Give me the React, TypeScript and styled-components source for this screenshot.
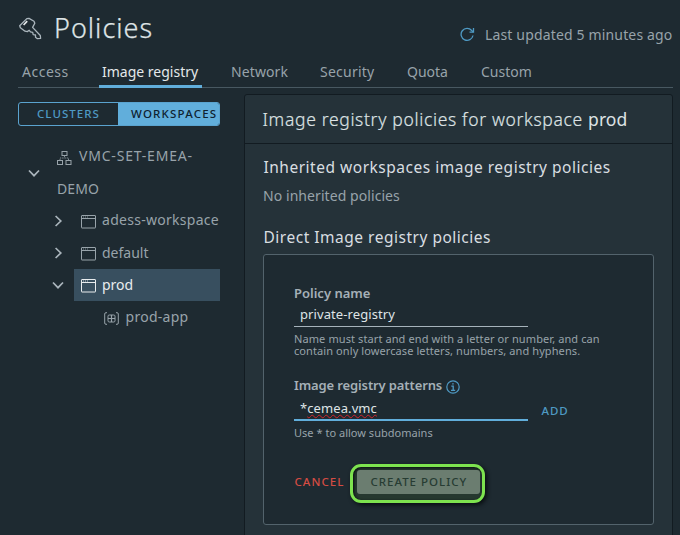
import React from "react";
import styled, { createGlobalStyle } from "styled-components";

const GlobalStyle = createGlobalStyle`
  * { box-sizing: border-box; }
  body {
    margin: 0;
    background: #1e2a31;
    color: #98a3aa;
    font-family: "Noto Sans", sans-serif;
    font-size: 14px;
    overflow: hidden;
  }
`;

const Page = styled.div`
  width: 680px;
  height: 535px;
  overflow: hidden;
  padding: 0 7.5px 0 18px;
  white-space: nowrap;
`;

const Header = styled.header`
  display: flex;
  align-items: center;
  height: 57px;
`;

const KeyIcon = styled.svg`
  width: 24px;
  height: 24px;
  margin: 1px 12px 0 0;
`;

const Title = styled.h1`
  margin: 0;
  height: 57px;
  line-height: 55px;
  font-size: 27px;
  font-weight: 300;
  letter-spacing: 1px;
  color: #dfe4e6;
  -webkit-text-stroke: 0.25px #dfe4e6;
`;

const Updated = styled.div`
  display: flex;
  align-items: center;
  gap: 10px;
  height: 20px;
  margin: 11px 0 0 auto;
  letter-spacing: 0.16px;
`;

const Tabs = styled.nav`
  display: flex;
  height: 31px;
  border-bottom: 1px solid #485861;
`;

const Tab = styled.a<{ $active?: boolean; $width: number; $track?: number }>`
  width: ${(p) => p.$width}px;
  height: 31px;
  padding-left: 4px;
  line-height: 30px;
  letter-spacing: ${(p) => p.$track ?? 0}px;
  color: ${(p) => (p.$active ? "#e4e8ea" : "#98a3aa")};
`;

const TabLabel = styled.span<{ $active?: boolean }>`
  display: inline-block;
  height: 31px;
  margin-left: -3px;
  padding: 0 4px 0 3px;
  border-bottom: ${(p) => (p.$active ? "3px solid #61aedb" : "0")};
`;

const Body = styled.div`
  display: flex;
  gap: 24px;
`;

const Sidebar = styled.aside`
  width: 202px;
  padding-top: 14px;
`;

const Toggle = styled.div`
  display: flex;
  height: 24px;
  border: 1px solid #5aa3cf;
  border-radius: 3px;
  overflow: hidden;
`;

const ToggleOption = styled.button<{ $selected?: boolean }>`
  flex: ${(p) => (p.$selected ? "1" : "0 0 99px")};
  padding: 0 0 0 ${(p) => (p.$selected ? 13 : 18)}px;
  border: 0;
  background: ${(p) => (p.$selected ? "#61aedb" : "transparent")};
  color: ${(p) => (p.$selected ? "#0e2230" : "#4f9ac4")};
  font: 500 11.5px/22px "Noto Sans", sans-serif;
  letter-spacing: ${(p) => (p.$selected ? 1.2 : 1.03)}px;
  text-align: left;
  white-space: nowrap;
`;

const Tree = styled.div`
  padding-top: 15px;
`;

const Root = styled.div`
  display: flex;
  align-items: center;
  gap: 16px;
  height: 64px;
  padding-left: 9px;
`;

const RootLabel = styled.div`
  line-height: 31px;
  height: 64px;
  white-space: normal;
  width: 150px;
  letter-spacing: 0.09px;
`;

const RootFirst = styled.div`
  display: flex;
  align-items: center;
  gap: 7px;
  height: 32px;
  letter-spacing: 0.8px;
`;

const RootName = styled.span`
  height: 32px;
  line-height: 30px;
`;

const Branch = styled.div`
  display: flex;
  align-items: center;
  height: 32px;
  padding-left: 33px;
`;

const Node = styled.div<{ $selected?: boolean; $track?: number }>`
  display: flex;
  align-items: center;
  flex: 1;
  gap: 6px;
  height: 32px;
  margin-left: 9px;
  padding-left: 7px;
  line-height: 32px;
  letter-spacing: ${(p) => p.$track ?? 0}px;
  background: ${(p) => (p.$selected ? "#384f5f" : "transparent")};
  color: ${(p) => (p.$selected ? "#e8ecee" : "#98a3aa")};
`;

const NodeLabel = styled.span<{ $raised?: boolean }>`
  height: 32px;
  line-height: ${(p) => (p.$raised ? 30 : 32)}px;
`;

const NodeIcon = styled.svg`
  margin-top: 2px;
`;

const Leaf = styled.div`
  display: flex;
  align-items: center;
  gap: 6.5px;
  height: 32px;
  padding-left: 86px;
  letter-spacing: 0.28px;
`;

const Card = styled.section`
  width: 429px;
  height: 460px;
  margin-top: 6px;
  border: 1px solid #121b21;
  border-radius: 3px;
  background: #253239;
`;

const CardHeader = styled.h2`
  height: 49px;
  margin: 0;
  padding-left: 18px;
  border-bottom: 1px solid #121b21;
  color: #dde2e4;
  font-size: 17.5px;
  font-weight: 300;
  line-height: 48px;
  letter-spacing: 0.67px;
  -webkit-text-stroke: 0.2px #dde2e4;
`;

const Strong = styled.strong`
  font-weight: 400;
  letter-spacing: 0.1px;
  -webkit-text-stroke: 0;
`;

const CardBody = styled.div`
  padding: 10px 18px 0;
`;

const SectionTitle = styled.h3`
  margin: 0 0 0 1px;
  color: #d9dee1;
  font-size: 15.5px;
  font-weight: 400;
  line-height: 26px;
  letter-spacing: 0.51px;
`;

const Empty = styled.p`
  margin: 4px 0 17px 0.5px;
  line-height: 23px;
  letter-spacing: 0.07px;
`;

const Form = styled.form`
  width: 391px;
  height: 271px;
  margin-top: 4px;
  padding: 29px 0 0 30px;
  border: 1px solid #53636c;
  border-radius: 3px;
  background: #1e2a31;
`;

const Label = styled.label<{ $track?: number }>`
  display: flex;
  align-items: center;
  gap: 4px;
  height: 18px;
  padding-left: 0.5px;
  color: #a5b0b7;
  font-size: 13px;
  font-weight: 600;
  line-height: 18px;
  letter-spacing: ${(p) => p.$track ?? 0}px;
`;

const InfoIcon = styled.svg`
  margin-top: 3px;
`;

const Field = styled.div<{ $focused?: boolean }>`
  width: 234px;
  height: ${(p) => (p.$focused ? 27 : 25)}px;
  padding-left: 6.5px;
  border-bottom: ${(p) => (p.$focused ? "2px solid #61aedb" : "1px solid #a6b3bb")};
  color: #dfe4e6;
  font-size: 13px;
  line-height: ${(p) => (p.$focused ? 28 : 24)}px;
  letter-spacing: 0.09px;
`;

const Misspelled = styled.span`
  text-decoration: underline wavy #d0242b 1px;
  text-underline-offset: 1px;
  text-decoration-skip-ink: none;
`;

const FieldRow = styled.div`
  display: flex;
  gap: 14px;
  height: 27px;
`;

const Hint = styled.p<{ $track: number }>`
  margin: 0 0 0 0.5px;
  font-size: 11px;
  line-height: 12px;
  letter-spacing: ${(p) => p.$track}px;
`;

const NameHelp = styled.div`
  height: 49px;
  padding-top: 6px;
`;

const PatternHelp = styled.div`
  height: 42.5px;
  padding-top: 6px;
`;

const LinkButton = styled.button<{ $danger?: boolean }>`
  padding: 0;
  height: 30px;
  margin-top: ${(p) => (p.$danger ? -3 : 2)}px;
  border: 0;
  background: none;
  color: ${(p) => (p.$danger ? "#d44c43" : "#4f9ac4")};
  font: 500 11.5px/30px "Noto Sans", sans-serif;
  letter-spacing: ${(p) => (p.$danger ? 1.05 : 0.9)}px;
`;

const Actions = styled.div`
  display: flex;
  align-items: center;
  height: 40px;
  padding-left: 1px;
`;

const Highlight = styled.div`
  width: 135px;
  height: 39px;
  margin-left: 6px;
  padding: 3px 0 0 4px;
  border: 3px solid #7de34f;
  border-radius: 11px;
  background: #26382f;
  box-shadow: 2px 2px 4px #080d10, inset 1px 1px 3px #080d10;
`;

const CreateButton = styled.button`
  display: block;
  width: 123px;
  height: 24px;
  padding: 0 0 0 13px;
  border: 0;
  border-radius: 3px;
  background: #6b7d70;
  color: #273c33;
  font: 500 11.5px/22px "Noto Sans", sans-serif;
  letter-spacing: 1px;
  text-align: left;
  white-space: nowrap;
`;

function Chevron({ open }: { open?: boolean }) {
  return (
    <svg width="14" height="14" viewBox="0 0 14 14" fill="none" stroke="#aab5bc" strokeWidth="1.7">
      <path d={open ? "M2 4.5 7 9.7 12 4.5" : "M4.6 2 9.8 7 4.6 12"} />
    </svg>
  );
}

function WindowIcon() {
  return (
    <NodeIcon width="15" height="14" viewBox="0 0 15 14" fill="none" stroke="currentColor">
      <rect x=".5" y=".5" width="14" height="12.5" rx=".4" />
      <path d="M1 3.5h13" />
      <path d="M2 2h1M4 2h1M6 2h1" strokeWidth=".8" />
    </NodeIcon>
  );
}

function ClusterIcon() {
  return (
    <NodeIcon width="15" height="14" viewBox="0 0 15 14" fill="none" stroke="currentColor">
      <rect x="5" y=".5" width="5" height="4" />
      <rect x=".5" y="9.5" width="5" height="4" />
      <rect x="9" y="9.5" width="5" height="4" />
      <path d="M7.5 4.5V7M3 9.500V7h8.500v2.500" strokeWidth=".8" strokeDasharray="1.5 .8" />
    </NodeIcon>
  );
}

function NamespaceIcon() {
  return (
    <NodeIcon width="15" height="13" viewBox="0 0 15 13" fill="none" stroke="currentColor">
      <path d="M3 .7H2Q.7.700.7 2v9q0 1.300 1.300 1.300h1M12 .7h1q1.300 0 1.300 1.300v9q0 1.300-1.300 1.300h-1" />
      <rect x="4" y="3" width="7" height="7" rx="1.200" />
      <path d="M4 6.500h7M7.500 3v7" strokeWidth="1.2" />
    </NodeIcon>
  );
}

export default function App() {
  return (
    <>
      <GlobalStyle />
      <Page>
        <Header>
          <KeyIcon viewBox="0 0 24 24" fill="none" stroke="#abb6bd" strokeWidth="1.3" strokeLinejoin="round">
            <path d="M8.800 1.600 11 1.400 16 4.200 16.800 6.200 14.600 10.400 22.300 18.500 22.600 21.300 19.400 21.700 17.500 20.300V18L15.200 17.600 14.700 15.300 12.500 14.900 11.200 13.300 9.300 14.600 7 14.200 2.400 10.800 1.700 8.700Z" />
            <path d="M5.600 8 9.200 4.200" stroke="#e4e8ea" strokeWidth="1.7" />
          </KeyIcon>
          <Title>Policies</Title>
          <Updated>
            <svg width="15" height="15" viewBox="0 0 15 15" fill="none" stroke="#4f9ac4" strokeWidth="1.3">
              <path d="M13 8.500A6 6 0 1 1 11.700 3.500L13.300 5" />
              <path d="M13.500 1V5.200H9.500" />
            </svg>
            <span>Last updated 5 minutes ago</span>
          </Updated>
        </Header>
        <Tabs>
          <Tab $width={80} $track={0.5}>Access</Tab>
          <Tab $width={129} $active>
            <TabLabel $active>Image registry</TabLabel>
          </Tab>
          <Tab $width={89} $track={0.1}>Network</Tab>
          <Tab $width={87} $track={0.24}>Security</Tab>
          <Tab $width={74}>Quota</Tab>
          <Tab $width={80}>Custom</Tab>
        </Tabs>
        <Body>
          <Sidebar>
            <Toggle>
              <ToggleOption>CLUSTERS</ToggleOption>
              <ToggleOption $selected>WORKSPACES</ToggleOption>
            </Toggle>
            <Tree>
              <Root>
                <Chevron open />
                <RootLabel>
                  <RootFirst>
                    <ClusterIcon />
                    <RootName>VMC-SET-EMEA-</RootName>
                  </RootFirst>
                  DEMO
                </RootLabel>
              </Root>
              <Branch>
                <Chevron />
                <Node $track={0.28}>
                  <WindowIcon />
                  <NodeLabel $raised>adess-workspace</NodeLabel>
                </Node>
              </Branch>
              <Branch>
                <Chevron />
                <Node>
                  <WindowIcon />
                  <NodeLabel>default</NodeLabel>
                </Node>
              </Branch>
              <Branch>
                <Chevron open />
                <Node $selected>
                  <WindowIcon />
                  <NodeLabel>prod</NodeLabel>
                </Node>
              </Branch>
              <Leaf>
                <NamespaceIcon />
                <NodeLabel>prod-app</NodeLabel>
              </Leaf>
            </Tree>
          </Sidebar>
          <Card>
            <CardHeader>
              Image registry policies for workspace <Strong>prod</Strong>
            </CardHeader>
            <CardBody>
              <SectionTitle>Inherited workspaces image registry policies</SectionTitle>
              <Empty>No inherited policies</Empty>
              <SectionTitle>Direct Image registry policies</SectionTitle>
              <Form>
                <Label>Policy name</Label>
                <Field>private-registry</Field>
                <NameHelp>
                  <Hint $track={0.1}>Name must start and end with a letter or number, and can</Hint>
                  <Hint $track={0.09}>contain only lowercase letters, numbers, and hyphens.</Hint>
                </NameHelp>
                <Label $track={-0.12}>
                  Image registry patterns
                  <InfoIcon width="14" height="14" viewBox="0 0 14 14" fill="none" stroke="#4f9ac4">
                    <circle cx="7" cy="7" r="6.200" strokeWidth="1.200" />
                    <path d="M5.300 6.200H7.200V10.300M5 10.300h4.200M6.200 3.800h1.500" strokeWidth="1.300" />
                  </InfoIcon>
                </Label>
                <FieldRow>
                  <Field $focused>
                    *<Misspelled>cemea.vmc</Misspelled>
                  </Field>
                  <LinkButton type="button">ADD</LinkButton>
                </FieldRow>
                <PatternHelp>
                  <Hint $track={0.02}>Use * to allow subdomains</Hint>
                </PatternHelp>
                <Actions>
                  <LinkButton $danger type="button">CANCEL</LinkButton>
                  <Highlight>
                    <CreateButton type="button">CREATE POLICY</CreateButton>
                  </Highlight>
                </Actions>
              </Form>
            </CardBody>
          </Card>
        </Body>
      </Page>
    </>
  );
}
